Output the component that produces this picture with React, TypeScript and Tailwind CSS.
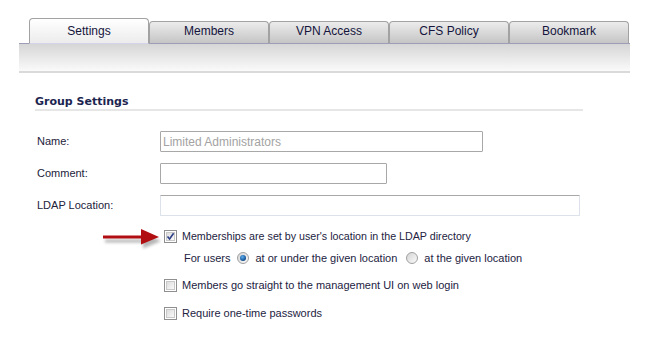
import React from "react";

const tabs = ["Settings", "Members", "VPN Access", "CFS Policy", "Bookmark"];

function Checkbox({ checked }: { checked?: boolean }) {
  return (
    <span className="relative box-border flex h-[13px] w-[13px] shrink-0 items-center justify-center border border-[#8f8f8f] bg-white">
      <span className="h-[9px] w-[9px] border border-[#c8c8c8] bg-gradient-to-br from-[#dcdcdc] to-[#fafafa]" />
      {checked && (
        <svg className="absolute left-0 top-0" width="11" height="11" viewBox="0 0 11 11">
          <path d="M2.5 5.5 L4.6 8 L8.6 2.2" fill="none" stroke="#2c3f86" strokeWidth="1.6" />
        </svg>
      )}
    </span>
  );
}

function Radio({ checked }: { checked?: boolean }) {
  return (
    <span className="flex h-[12px] w-[12px] shrink-0 items-center justify-center rounded-full border border-[#a0a0a0] bg-gradient-to-br from-[#d4d4d4] to-[#fbfbfb]">
      {checked && (
        <span className="h-[6px] w-[6px] rounded-full bg-[radial-gradient(circle_at_40%_35%,#5fb0ee,#1a5a9c_60%,#0b2a55)]" />
      )}
    </span>
  );
}

function Arrow() {
  return (
    <svg width="58" height="22" viewBox="0 0 58 22" className="shrink-0 overflow-visible">
      <defs>
        <filter id="arrow-shadow" x="-20%" y="-50%" width="140%" height="200%">
          <feGaussianBlur stdDeviation="1.4" />
        </filter>
      </defs>
      <g transform="translate(2 4)" fill="#7a7a7a" opacity="0.55" filter="url(#arrow-shadow)">
        <rect x="0" y="9.5" width="40" height="3" />
        <path d="M38 3 L56 11 L38 18.5 Z" />
      </g>
      <rect x="0" y="9.5" width="40" height="3" fill="#b10e12" />
      <path d="M38 3 L56 11 L38 18.5 Z" fill="#b10e12" />
    </svg>
  );
}

export default function App() {
  return (
    <div className="h-[339px] w-[649px] overflow-hidden bg-white font-['Liberation_Sans',Arial,sans-serif]">
      {/* Tab strip */}
      <div className="flex items-end pl-[29px] pt-[18px]">
        {tabs.map((t, i) =>
          i === 0 ? (
            <div
              key={t}
              className="relative z-10 -mb-px flex h-[26px] w-[120px] items-center justify-center rounded-t-[4px] border border-b-[#d3d3ea] border-[#a2a2a2] bg-gradient-to-b from-white to-[#ececec] pb-px text-[12px] text-[#14143c]"
            >
              {t}
            </div>
          ) : (
            <div
              key={t}
              className="flex h-[22px] w-[120px] items-center justify-center rounded-t-[4px] border border-b-0 border-[#a2a2a2] bg-gradient-to-b from-[#ececec] to-[#c5c5c5] pb-[3px] text-[12px] text-[#14143c]"
            >
              {t}
            </div>
          )
        )}
      </div>
      <div className="ml-[19px] h-[30px] w-[611px] border-t border-b-2 border-t-[#9d9db8] border-b-[#dadada] bg-gradient-to-b from-[#d6d6d6] to-[#fafafa]" />

      {/* Group settings */}
      <div className="ml-[35px] mt-[22px] w-[548px] border-b-2 border-[#e6e6e6]">
        <h2 className="font-['DejaVu_Sans',Verdana,sans-serif] text-[11px] font-bold leading-[14px] text-[#1b2550]">
          Group Settings
        </h2>
      </div>

      <div className="ml-[37px] mt-[20px] flex flex-col gap-[11px] text-[11px] text-[#22223a]">
        <div className="flex h-[21px] items-center">
          <span className="w-[123px]">Name:</span>
          <input
            readOnly
            placeholder="Limited Administrators"
            className="box-border h-[21px] w-[323px] rounded-[1px] border border-[#a8a8a8] px-[2px] text-[12px] placeholder:text-[#a3a3a3]"
          />
        </div>
        <div className="flex h-[21px] items-center">
          <span className="w-[123px]">Comment:</span>
          <input
            readOnly
            className="box-border h-[21px] w-[227px] rounded-[1px] border border-[#a8a8a8] px-[2px] text-[12px]"
          />
        </div>
        <div className="flex h-[21px] items-center">
          <span className="w-[123px]">LDAP Location:</span>
          <input
            readOnly
            className="box-border h-[21px] w-[420px] rounded-[1px] border border-[#dde2ea] border-t-[#a8a8a8] px-[2px] text-[12px]"
          />
        </div>
      </div>

      {/* Options */}
      <div className="mt-[14px] flex flex-col text-[10.7px] text-[#23233f]">
        <div className="ml-[103px] flex h-[13px] items-center">
          <Arrow />
          <span className="ml-[3px]">
            <Checkbox checked />
          </span>
          <span className="ml-[5px]">Memberships are set by user's location in the LDAP directory</span>
        </div>
        <div className="ml-[184px] mt-[8px] flex h-[14px] items-center text-[11px]">
          <span>For users</span>
          <span className="ml-[7px]">
            <Radio checked />
          </span>
          <span className="ml-[6px]">at or under the given location</span>
          <span className="ml-[9px]">
            <Radio />
          </span>
          <span className="ml-[6px]">at the given location</span>
        </div>
        <div className="ml-[164px] mt-[14px] flex h-[13px] items-center text-[11px]">
          <Checkbox />
          <span className="ml-[5px]">Members go straight to the management UI on web login</span>
        </div>
        <div className="ml-[164px] mt-[15px] flex h-[13px] items-center text-[11px]">
          <Checkbox />
          <span className="ml-[5px]">Require one-time passwords</span>
        </div>
      </div>
    </div>
  );
}
